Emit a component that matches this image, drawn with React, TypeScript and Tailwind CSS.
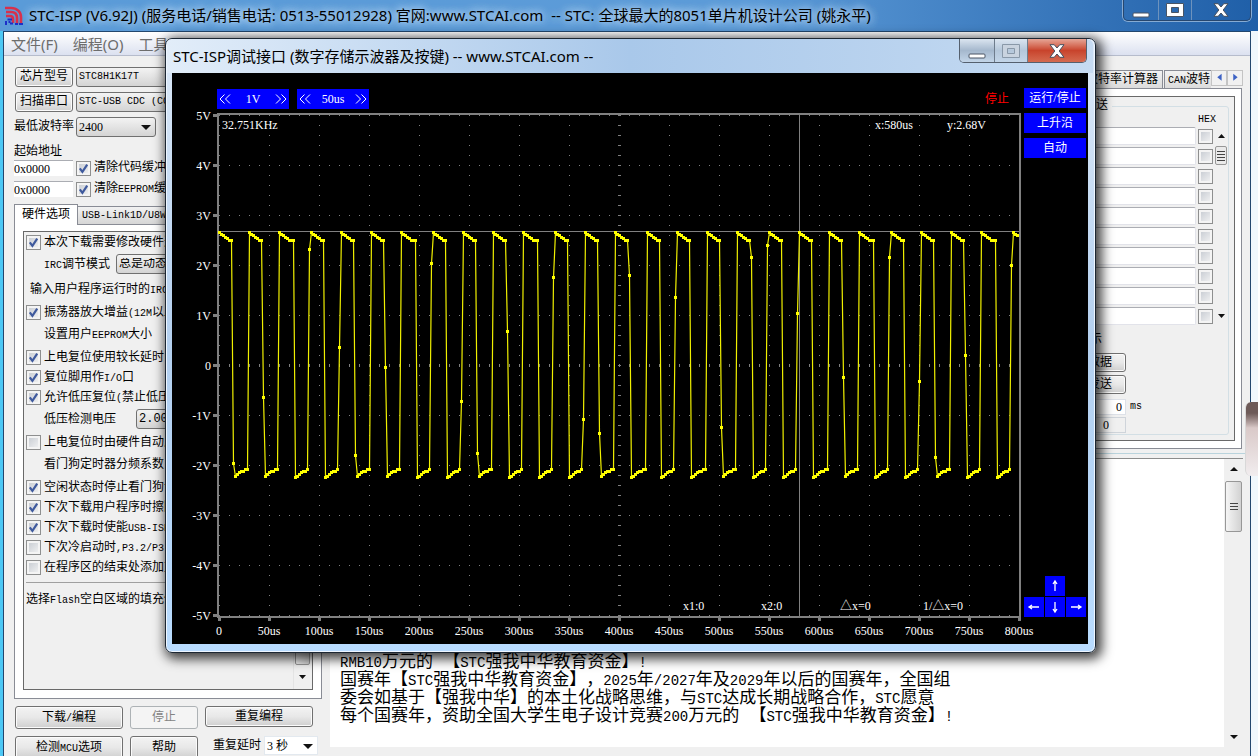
import React from "react";

const CJK = "font-['Liberation_Mono','Noto_Sans_CJK_SC',monospace]";

// Latin runs are set in a half-width mono size next to the full-width Chinese glyphs
const Mixed: React.FC<{ text: string; large?: boolean }> = ({ text, large }) => (
  <>
    {text.split(/([\x21-\x7e]+)/).map((part, i) =>
      i % 2 ? (
        <span key={i} className={large ? "text-[14px]" : "text-[10px]"}>
          {part}
        </span>
      ) : (
        part
      )
    )}
  </>
);

const CheckBox: React.FC<{ id: string; checked?: boolean }> = ({ id, checked }) => (
  <span className="relative inline-flex w-[15px] h-[15px] shrink-0">
    <input
      id={id}
      type="checkbox"
      aria-label={id}
      defaultChecked={checked}
      className="peer appearance-none w-[15px] h-[15px] border border-[#8e8f8f] bg-linear-to-br from-[#c3c8cf] to-[#f6f6f6] shadow-[inset_0_0_0_2px_#f4f4f4]"
    />
    <svg
      viewBox="0 0 15 15"
      className="hidden peer-checked:block absolute inset-0 w-[15px] h-[15px] pointer-events-none"
    >
      <path d="M3.8 7.4 L6.4 10.8 L11.2 3.6" fill="none" stroke="#3f5a9d" strokeWidth="2.2" />
    </svg>
  </span>
);

const Button: React.FC<{ text: string; className?: string; disabled?: boolean }> = ({
  text,
  className = "",
  disabled,
}) => (
  <button
    type="button"
    disabled={disabled}
    className={`border rounded-[3px] whitespace-nowrap leading-none text-[12px] ${
      disabled
        ? "border-[#adb2b5] bg-[#f4f4f4] text-[#838383]"
        : "border-[#707070] bg-linear-to-b from-[#f3f3f3] via-[#e8e8e8] to-[#cfcfcf] shadow-[inset_0_0_0_1px_#fbfbfb]"
    } ${className}`}
  >
    <Mixed text={text} />
  </button>
);

const Select: React.FC<{ label: string; value: string; className?: string; arrow?: boolean }> = ({
  label,
  value,
  className = "",
  arrow,
}) => (
  <span className="relative inline-flex">
    <select
      aria-label={label}
      className={`appearance-none border border-[#707070] rounded-[3px] bg-linear-to-b from-[#f3f3f3] to-[#d4d4d4] h-5 pl-[2px] leading-none ${className}`}
    >
      <option>{value}</option>
    </select>
    {arrow && <Arrow className="absolute right-[5px] top-[8px] w-[10px] h-[5px]" />}
  </span>
);

const Arrow: React.FC<{ className: string; up?: boolean }> = ({ className, up }) => (
  <svg viewBox="0 0 10 5" className={className} preserveAspectRatio="none">
    <path d={up ? "M0 5h10L5 0z" : "M0 0h10L5 5z"} fill="#111" />
  </svg>
);

type Option = { text: string; box?: boolean; checked?: boolean; select?: string; gap?: string; indent?: string };

const options: Option[] = [
  { text: "本次下载需要修改硬件选项", box: true, checked: true },
  { text: "IRC调节模式", select: "总是动态调节", gap: "mt-[2px]" },
  { text: "输入用户程序运行时的IRC频率", gap: "mt-[5px]", indent: "pl-1" },
  { text: "振荡器放大增益(12M以上建议选择)", box: true, checked: true, gap: "mt-[3px]" },
  { text: "设置用户EEPROM大小", gap: "mt-[2px]" },
  { text: "上电复位使用较长延时", box: true, checked: true, gap: "mt-[3px]" },
  { text: "复位脚用作I/O口", box: true, checked: true },
  { text: "允许低压复位(禁止低压中断)", box: true, checked: true },
  { text: "低压检测电压", select: "2.00V", gap: "mt-[2px]" },
  { text: "上电复位时由硬件自动启动看门狗", box: true, gap: "mt-[3px]" },
  { text: "看门狗定时器分频系数", gap: "mt-[2px]" },
  { text: "空闲状态时停止看门狗计数", box: true, checked: true, gap: "mt-[3px]" },
  { text: "下次下载用户程序时擦除用户EEPROM区", box: true, checked: true },
  { text: "下次下载时使能USB-ISP下载模式", box: true, checked: true },
  { text: "下次冷启动时,P3.2/P3.3为0/0才可下载程序", box: true },
  { text: "在程序区的结束处添加重要测试参数", box: true },
];

const HardwareOptions = () => (
  <div className="flex-1 flex min-h-0 mb-[7px] border border-[#898c95] bg-white p-[8px] pt-[6px]">
    <div className="flex-1 flex min-w-0 border border-[#696969] bg-[#f0f0f0]">
      <div className="flex-1 min-w-0 overflow-hidden pl-[2px] whitespace-nowrap">
        {options.map((o) => (
          <div
            key={o.text}
            className={`flex items-center h-5 ${o.gap ?? ""} ${o.box ? "" : o.indent ?? "pl-[18px]"}`}
          >
            {o.box && <CheckBox id={o.text} checked={o.checked} />}
            <label htmlFor={o.box ? o.text : undefined} className={o.box ? "pl-[3px] pt-px" : "pt-px"}>
              <Mixed text={o.text} />
            </label>
            {o.select && (
              <span className={o.select === "2.00V" ? "ml-5" : "ml-[6px]"}>
                <Select label={o.text} value={o.select} className="w-[100px] text-[12px]" />
              </span>
            )}
          </div>
        ))}
        <hr className="mt-[5px] border-[#a0a0a0]" />
        <div className="h-5 mt-[7px] leading-5">
          <Mixed text="选择Flash空白区域的填充值" />
        </div>
      </div>
      <div className="w-[17px] mr-[2px] flex flex-col items-center justify-end bg-[#f0f0f0] border-l border-[#e4e4e4]">
        <div className="w-[15px] flex-1 border border-[#979797] rounded-[2px] bg-linear-to-r from-[#f3f3f3] to-[#d2d2d2]" />
        <div className="h-6 flex items-center">
          <Arrow className="w-[7px] h-[4px]" />
        </div>
      </div>
    </div>
  </div>
);

const Programmer = () => (
  <section className="w-[326px] shrink-0 flex flex-col pl-[10px] pr-[8px] pt-[11px]">
    <div className="flex gap-[3px] pl-px">
      <Button text="芯片型号" className="w-[58px] h-5" />
      <Select label="芯片型号" value="STC8H1K17T" className="w-[200px] text-[10px]" />
    </div>
    <div className="flex gap-[3px] pl-px mt-[5px]">
      <Button text="扫描串口" className="w-[58px] h-5" />
      <Select label="串口" value="STC-USB CDC (COM5)" className="w-[200px] text-[10px]" />
    </div>
    <div className="flex items-center mt-[5px] whitespace-nowrap">
      <span className="w-[62px]">最低波特率</span>
      <Select
        label="最低波特率"
        value="2400"
        arrow
        className="w-[80px] text-[12px] font-['Liberation_Serif',serif]"
      />
    </div>
    <div className="mt-[7px] h-4 leading-4">起始地址</div>
    {["清除代码缓冲区", "清除EEPROM缓冲区"].map((text) => (
      <div key={text} className="flex items-center h-4 mb-[5px] whitespace-nowrap">
        <input
          aria-label={`${text}起始地址`}
          defaultValue="0x0000"
          className="w-[59px] h-4 bg-white border-t border-[#abadb3] text-[12px] font-['Liberation_Serif',serif]"
        />
        <span className="w-[3px]" />
        <CheckBox id={text} checked />
        <label htmlFor={text} className="pl-[3px]">
          <Mixed text={text} />
        </label>
      </div>
    ))}
    <div className="flex items-end mt-[2px] whitespace-nowrap">
      <button
        type="button"
        className="relative z-10 -mb-px h-[21px] w-[64px] border border-b-0 border-[#898c95] bg-white"
      >
        硬件选项
      </button>
      <button
        type="button"
        className="h-[18px] px-1 border border-b-0 border-l-0 border-[#898c95] bg-linear-to-b from-[#f2f2f2] to-[#d6d6d6] text-[10px]"
      >
        USB-Link1D/U8W
      </button>
    </div>
    <HardwareOptions />
    <div className="flex gap-[7px] pl-px">
      <Button text="下载/编程" className="w-[108px] h-[23px]" />
      <Button text="停止" disabled className="w-[68px] h-[23px]" />
      <Button text="重复编程" className="w-[108px] h-[21px]" />
    </div>
    <div className="flex gap-[7px] pl-px mt-[7px] -mb-[3px] whitespace-nowrap">
      <Button text="检测MCU选项" className="w-[108px] h-[23px]" />
      <Button text="帮助" className="w-[68px] h-[23px]" />
      <label className="flex items-center h-[19px] pl-2">
        <span className="w-[51px]">重复延时</span>
        <span className="relative inline-flex">
          <select className="appearance-none w-[54px] h-[19px] bg-white border border-[#e3e9ef] pl-[2px] font-['Liberation_Serif','Noto_Sans_CJK_SC',serif]">
            <option>3 秒</option>
          </select>
          <Arrow className="absolute right-[5px] top-[8px] w-[10px] h-[5px]" />
        </span>
      </label>
    </div>
  </section>
);

const SendPanel = () => (
  <div className="h-[393px] flex flex-col pt-[14px] pr-[7px]">
    <div className="flex justify-end h-[18px] whitespace-nowrap">
      <button type="button" className="px-1 border border-b-0 border-[#898c95] bg-linear-to-b from-[#f2f2f2] to-[#dcdcdc]">
        波特率计算器
      </button>
      <button
        type="button"
        className="ml-px w-[47px] text-left pl-[3px] border border-b-0 border-r-0 border-[#898c95] bg-linear-to-b from-[#f2f2f2] to-[#dcdcdc]"
      >
        <Mixed text="CAN波特" />
      </button>
      {["M11 3v8L6 7z", "M6 3v8L11 7z"].map((d, i) => (
        <button key={d} type="button" aria-label={i ? "后" : "前"} className="w-4 h-4 border border-[#c4c4c4] bg-[#f1f1f1]">
          <svg viewBox="0 0 16 16" className="w-[14px] h-[14px]">
            <path d={d} fill="#3d62c4" />
          </svg>
        </button>
      ))}
    </div>
    <div className="flex-1 mr-px border border-[#898c95] bg-white p-[7px] pr-[6px]">
      <div className="h-full border border-[#696969] bg-[#f0f0f0] p-[5px] pt-[2px]">
        <fieldset className="h-full relative">
          <div className="absolute inset-x-0 top-[7px] bottom-0 border border-[#d3dfe5] rounded-[3px]" />
          <div className="relative flex justify-end pr-[117px] h-[14px] leading-[14px]">
            <span className="bg-[#f0f0f0] pr-1">多字符串发送</span>
          </div>
          <div className="relative flex justify-end pr-[13px] h-[13px] leading-[13px] text-[10px]">HEX</div>
          <div className="relative flex">
            <div className="flex-1">
              {Array.from({ length: 10 }, (_, i) => (
                <div key={i} className="flex items-center justify-end gap-[2px] h-5">
                  <input
                    aria-label={`字符串${i + 1}`}
                    className="w-[280px] h-[18px] bg-white border border-[#e2e3ea] border-t-[#abadb3] rounded-[2px]"
                  />
                  <CheckBox id={`HEX ${i + 1}`} />
                </div>
              ))}
            </div>
            <div className="w-4 flex flex-col items-center justify-between py-2">
              <div className="flex flex-col items-center gap-2">
                <Arrow up className="w-[7px] h-[4px]" />
                <div className="w-[12px] h-[19px] border border-[#979797] rounded-[2px] bg-[#eaeaea] flex flex-col justify-center items-center gap-[2px]">
                  <i className="w-2 h-px bg-[#444]" />
                  <i className="w-2 h-px bg-[#444]" />
                  <i className="w-2 h-px bg-[#444]" />
                  <i className="w-2 h-px bg-[#444]" />
                </div>
              </div>
              <Arrow className="w-[7px] h-[4px]" />
            </div>
          </div>
          <div className="relative flex flex-col items-end pr-[103px] pt-[5px]">
            <span className="pr-6 h-[18px] leading-[18px] mb-[4px]">提示</span>
            <Button text="清空全部数据" className="w-[100px] h-[19px] mb-[3px]" />
            <Button text="自动循环发送" className="w-[100px] h-[19px] mb-[5px]" />
            <div className="relative">
              <input
                aria-label="间隔"
                defaultValue="0"
                className="block w-[60px] h-4 pr-[3px] text-right bg-white border border-[#dde1e8] font-['Liberation_Serif',serif]"
              />
              <span className="absolute left-full top-0 pl-1 text-[10px] leading-4">ms</span>
            </div>
            <input
              aria-label="计数"
              readOnly
              defaultValue="0"
              className="block w-[60px] h-4 mt-[2px] pl-[3px] pr-[16px] text-right bg-[#f0f0f0] border border-[#cfd4da] font-['Liberation_Serif',serif]"
            />
          </div>
        </fieldset>
      </div>
    </div>
  </div>
);

const notes = [
  "RMB10万元的 【STC强我中华教育资金】!",
  "国赛年【STC强我中华教育资金】，2025年/2027年及2029年以后的国赛年，全国组",
  "委会如基于【强我中华】的本土化战略思维，与STC达成长期战略合作，STC愿意",
  "每个国赛年，资助全国大学生电子设计竞赛200万元的 【STC强我中华教育资金】!",
];

const NotesPanel = () => (
  <div className="flex-1 min-h-0 flex border-t border-[#8c8c8c] bg-white mr-[7px] mb-[9px]">
    <div className="flex-1 flex flex-col justify-end pl-[10px] pb-[21px] text-[17px] leading-[18px] whitespace-pre [text-spacing-trim:space-all]">
      {notes.map((line) => (
        <p key={line} className="h-[18px]">
          <Mixed text={line} large />
        </p>
      ))}
    </div>
    <div className="w-[19px] bg-[#f0f0f0] flex flex-col items-center justify-between py-2">
      <div className="flex flex-col items-center gap-[10px]">
        <Arrow up className="w-[8px] h-[4px]" />
        <div className="w-[17px] h-[51px] border border-[#979797] rounded-[2px] bg-linear-to-r from-[#f5f5f5] to-[#d2d2d2] flex flex-col items-center justify-center gap-[2px]">
          <i className="w-2 h-px bg-[#444]" />
          <i className="w-2 h-px bg-[#444]" />
          <i className="w-2 h-px bg-[#444]" />
        </div>
      </div>
      <Arrow className="w-[8px] h-[4px]" />
    </div>
  </div>
);

const PERIOD = 30.53; // us, 32.751KHz
const HIGH_TIME = 14;

// samples caught in the middle of an edge, time (us) -> volts
const edgeSamples: Record<number, number> = {
  14: -1.96, 44: -0.64, 90: 2.32, 120: 0.36, 136: -1.8, 166: -0.04, 212: 2.04,
  242: -0.72, 258: -1.76, 288: 0.68, 334: 1.76, 364: -1.08, 380: -1.36, 410: 1.8,
  456: 1.36, 502: -1.24, 532: 2.16, 548: 2.4, 578: 1.04, 624: -0.24, 670: 2.16,
  700: -0.32, 716: -1.84, 746: 0.2, 792: 2.0,
};

const highLevels = [2.66, 2.62, 2.6, 2.56, 2.54, 2.5, 2.5, 2.5];
const lowLevels = [-2.24, -2.22, -2.18, -2.14, -2.12, -2.12, -2.08, -2.08];

const sampleAt = (t: number) => {
  if (t in edgeSamples) return edgeSamples[t];
  const phase = (t + 1.3) % PERIOD;
  return phase < HIGH_TIME + 0.6
    ? highLevels[Math.floor(phase / 2)]
    : lowLevels[Math.min(7, Math.floor((phase - HIGH_TIME - 0.6) / 2))];
};

const px = (t: number) => 47 + t;
const py = (v: number) => 256 - 50 * v;
const samples = Array.from({ length: 400 }, (_, i) => ({ x: px(i * 2), y: Math.round(py(sampleAt(i * 2))) }));
const range = (n: number) => Array.from({ length: n }, (_, i) => i);

const Chart = () => (
  <svg
    viewBox="0 0 851 535"
    className="block w-full overflow-visible font-['Liberation_Serif','Noto_Sans_CJK_SC',serif] text-[12px]"
    fill="#fff"
  >
    {/* grid dots */}
    <g fill="#808080" shapeRendering="crispEdges">
      {range(17).map((c) =>
        range(51).map((r) => <rect key={`${c}-${r}`} x={px(c * 50)} y={6 + r * 10} width="1" height="1" />)
      )}
      {range(11).map((r) =>
        range(81).map((c) => <rect key={`${c}-${r}`} x={px(c * 10)} y={6 + r * 50} width="1" height="1" />)
      )}
      {range(81).map((c) => (
        <rect key={c} x={px(c * 10)} y="255" width="1" height="3" />
      ))}
      {range(51).map((r) => (
        <rect key={r} x={px(399)} y={6 + r * 10} width="3" height="1" />
      ))}
      <rect x="45" y="4" width="804" height="2" />
      <rect x="45" y="507" width="804" height="2" />
      <rect x="45" y="4" width="2" height="505" />
      <rect x="847" y="4" width="2" height="505" />
      {range(11).map((r) => (
        <rect key={r} x="41" y={5 + r * 50} width="5" height="3" />
      ))}
      {range(17).map((c) => (
        <rect key={c} x={px(c * 50) - 1} y="508" width="3" height="4" />
      ))}
      {/* cursors */}
      <rect x="627" y="6" width="1" height="501" />
      <rect x="47" y="122" width="801" height="1" />
    </g>

    {range(11).map((r) => (
      <text key={r} x="39" y={11 + r * 50} textAnchor="end">
        {r === 5 ? "0" : `${5 - r}V`}
      </text>
    ))}
    {range(17).map((c) => (
      <text key={c} x={px(c * 50)} y="526" textAnchor="middle">
        {c === 0 ? "0" : `${c * 50}us`}
      </text>
    ))}
    <text x="50" y="20">32.751KHz</text>
    <text x="703" y="20">x:580us</text>
    <text x="775" y="20">y:2.68V</text>
    <text x="511" y="501">x1:0</text>
    <text x="589" y="501">x2:0</text>
    <text x="668" y="501">△x=0</text>
    <text x="751" y="501">1/△x=0</text>

    <polyline
      points={samples.map((s) => `${s.x + 0.5},${s.y + 0.5}`).join(" ")}
      fill="none"
      stroke="#f0f000"
      strokeWidth="1.2"
    />
    <g fill="#ff0" shapeRendering="crispEdges">
      {samples.map((s) => (
        <rect key={s.x} x={s.x - 1} y={s.y - 1} width="3" height="3" />
      ))}
    </g>
  </svg>
);

const Chevrons: React.FC<{ right?: boolean }> = ({ right }) => (
  <svg viewBox="0 0 12 10" className="w-3 h-[10px]">
    <path
      d={right ? "M1 0.5 L5.5 5 L1 9.5 M6.5 0.5 L11 5 L6.5 9.5" : "M5.5 0.5 L1 5 L5.5 9.5 M11 0.5 L6.5 5 L11 9.5"}
      fill="none"
      stroke="#fff"
    />
  </svg>
);

const Stepper: React.FC<{ value: string; name: string }> = ({ value, name }) => (
  <div className="w-[72px] h-5 flex items-center justify-between bg-[#0000ff] px-[2px]">
    <button type="button" aria-label={`${name}-`}>
      <Chevrons />
    </button>
    <span>{value}</span>
    <button type="button" aria-label={`${name}+`}>
      <Chevrons right />
    </button>
  </div>
);

const arrowPaths: Record<string, string> = {
  up: "M10 15V5M8 8l2-3 2 3",
  left: "M15 10H5M8 8l-3 2 3 2",
  down: "M10 5v10M8 12l2 3 2-3",
  right: "M5 10h10M12 8l3 2-3 2",
};

const ArrowKey: React.FC<{ dir: string }> = ({ dir }) => (
  <button type="button" aria-label={dir} className="w-5 h-5 bg-[#0000ff]">
    <svg viewBox="0 0 20 20" className="w-5 h-5">
      <path d={arrowPaths[dir]} fill="none" stroke="#fff" strokeWidth="1.3" />
    </svg>
  </button>
);

const MinIcon = () => (
  <svg viewBox="0 0 18 16" className="w-[18px] h-4">
    <rect x="1" y="11" width="16" height="4" rx="1" fill="#fff" stroke="#4a5564" />
  </svg>
);

const MaxIcon: React.FC<{ dim?: boolean }> = ({ dim }) => (
  <svg viewBox="0 0 18 16" className="w-[18px] h-4">
    <path
      fillRule="evenodd"
      d="M.5 1.5h17v13H.5z M5.5 5.5v5h7v-5z"
      fill={dim ? "#c9d3df" : "#fff"}
      stroke={dim ? "#8998a8" : "#4a5564"}
    />
  </svg>
);

const CloseIcon = () => (
  <svg viewBox="0 0 16 14" className="w-4 h-[14px]">
    <path
      d="M1 .7h4.2L8 4l2.800-3.300H15L10.200 7l4.800 6.300h-4.200L8 10l-2.800 3.300H1L5.800 7z"
      fill="#fff"
      stroke="#444f5e"
    />
  </svg>
);

const ScopeWindow = () => (
  <div className="absolute left-[165px] right-[162px] top-[38px] rounded-[7px] border border-[#1c2733] bg-linear-to-b from-[#dce9f8] via-[#b4d0ef] to-[#b9dcff] shadow-[3px_3px_12px_3px_rgba(0,0,0,0.75),inset_0_0_0_1px_#eef6ff] pl-[6px] pr-[7px] pb-[8px]">
    <div className="h-[34px] flex justify-between rounded-t-[6px] -mx-[5px] px-[6px] bg-linear-to-r from-[#e2edf9] via-[#a9c8ea] to-[#c6dbf2]">
      <h2 className="leading-[35px] whitespace-nowrap text-[15px] font-['Noto_Sans','Noto_Sans_CJK_SC',sans-serif]">
        STC-ISP调试接口 (数字存储示波器及按键) -- www.STCAI.com --
      </h2>
      <div className="flex h-[24px] rounded-b-[5px] border border-t-0 border-[#55606e] overflow-hidden">
        <button type="button" aria-label="最小化" className="w-[35px] flex justify-center items-center border-r border-[#6e7c8c] bg-linear-to-b from-[#dbe5f0] via-[#a5b8cd] to-[#c3d5e8]">
          <MinIcon />
        </button>
        <button type="button" aria-label="最大化" disabled className="w-[33px] flex justify-center items-center border-r border-[#6e7c8c] bg-linear-to-b from-[#dbe5f0] via-[#b5c7da] to-[#c3d5e8]">
          <MaxIcon dim />
        </button>
        <button type="button" aria-label="关闭" className="w-[58px] flex justify-center items-center bg-linear-to-b from-[#e5a596] via-[#c8432c] to-[#d46a50]">
          <CloseIcon />
        </button>
      </div>
    </div>
    <div className="flex bg-black text-white pt-[15px] text-[12px] font-['Liberation_Serif','Noto_Sans_CJK_SC',serif]">
      <div className="flex-1 min-w-0">
        <div className="flex items-center pl-[45px] gap-2 h-[21px]">
          <Stepper value="1V" name="volts" />
          <Stepper value="50us" name="time" />
          <span className="ml-auto pr-[14px] text-[#ff0000]">停止</span>
        </div>
        <Chart />
      </div>
      <div className="w-[65px] flex flex-col gap-[5px] pl-px">
        {["运行/停止", "上升沿", "自动"].map((t) => (
          <button key={t} type="button" className="w-[62px] h-5 bg-[#0000ff] leading-5 whitespace-nowrap">
            {t}
          </button>
        ))}
        <div className="mt-auto mb-[27px] w-[62px] flex flex-col items-center gap-px">
          <ArrowKey dir="up" />
          <div className="flex gap-px">
            <ArrowKey dir="left" />
            <ArrowKey dir="down" />
            <ArrowKey dir="right" />
          </div>
        </div>
      </div>
    </div>
  </div>
);

const Logo = () => (
  <svg viewBox="0 0 20 20" className="w-5 h-5" fill="none" strokeWidth="2.6">
    <path d="M1 2h6c6 0 10 4 10 9v7" stroke="#d8304c" />
    <path d="M2 6h5c4 0 6 2 6 6v6" stroke="#d8304c" />
    <path d="M2 10h4c2 0 3 1 3 3v4" stroke="#d8304c" />
    <path d="M8 13.500H3.500M2 15v4M5.500 15v2M6 17.500h3M11 18h3M15 18h4" stroke="#1c2fc8" strokeWidth="2" />
  </svg>
);

const App: React.FC = () => (
  <div className={`relative h-screen overflow-hidden flex flex-col text-[12px] text-black bg-linear-to-r from-[#4cc8f5] to-[#f0f7fc] ${CJK}`}>
    <header className="h-[31px] shrink-0 flex justify-between pl-1 pr-[7px] bg-linear-to-r from-[#5a9bd8] via-[#5c9bd8] via-60% to-[#1f5fa8]">
      <div className="flex items-center gap-[5px]">
        <Logo />
        <h1 className="whitespace-pre text-[15px] font-['Noto_Sans','Noto_Sans_CJK_SC',sans-serif] [text-shadow:0_0_8px_#cfe4f8,0_0_8px_#cfe4f8]">
          {"STC-ISP (V6.92J) (服务电话/销售电话: 0513-55012928) 官网:www.STCAI.com  -- STC: 全球最大的8051单片机设计公司 (姚永平)"}
        </h1>
      </div>
      <div className="flex h-[21px] border border-t-0 border-[#27476f] rounded-b-[5px] shadow-[0_0_0_1px_#86abd3]">
        <button type="button" aria-label="最小化" className="w-[35px] flex justify-center items-center border-r border-[#6e93bd]">
          <MinIcon />
        </button>
        <button type="button" aria-label="最大化" className="w-[33px] flex justify-center items-center border-r border-[#6e93bd]">
          <MaxIcon />
        </button>
        <button type="button" aria-label="关闭" className="w-[58px] flex justify-center items-center">
          <CloseIcon />
        </button>
      </div>
    </header>
    <div className="flex-1 min-h-0 ml-[3px] mr-[7px] flex flex-col border-x border-t border-[#23476e] bg-[#f0f0f0]">
      <nav className="h-6 shrink-0 flex gap-[15px] pl-[7px] border-b border-[#b6bccc] bg-linear-to-b from-white to-[#dce1f0] text-[15px] leading-6 font-['Noto_Sans','Noto_Sans_CJK_SC',sans-serif]">
        {["文件(F)", "编程(O)", "工具(T)"].map((m) => (
          <a key={m} href="#" className="text-[#6d6d6d]">
            {m}
          </a>
        ))}
      </nav>
      <div className="flex-1 min-h-0 flex">
        <Programmer />
        <section className="flex-1 min-w-0 flex flex-col">
          <SendPanel />
          <div className="h-[9px] flex flex-col justify-center">
            <hr className="border-[#b9d3dc]" />
          </div>
          <NotesPanel />
        </section>
      </div>
    </div>
    <div className="absolute right-0 top-[402px] w-[13px] h-[74px] rounded-l-[6px] border-l border-[#d8d8d8] bg-linear-to-b from-[#6d5a58] from-15% via-[#d9c9c8] via-35% to-[#f1edef]" />
    <ScopeWindow />
  </div>
);

export default App;
